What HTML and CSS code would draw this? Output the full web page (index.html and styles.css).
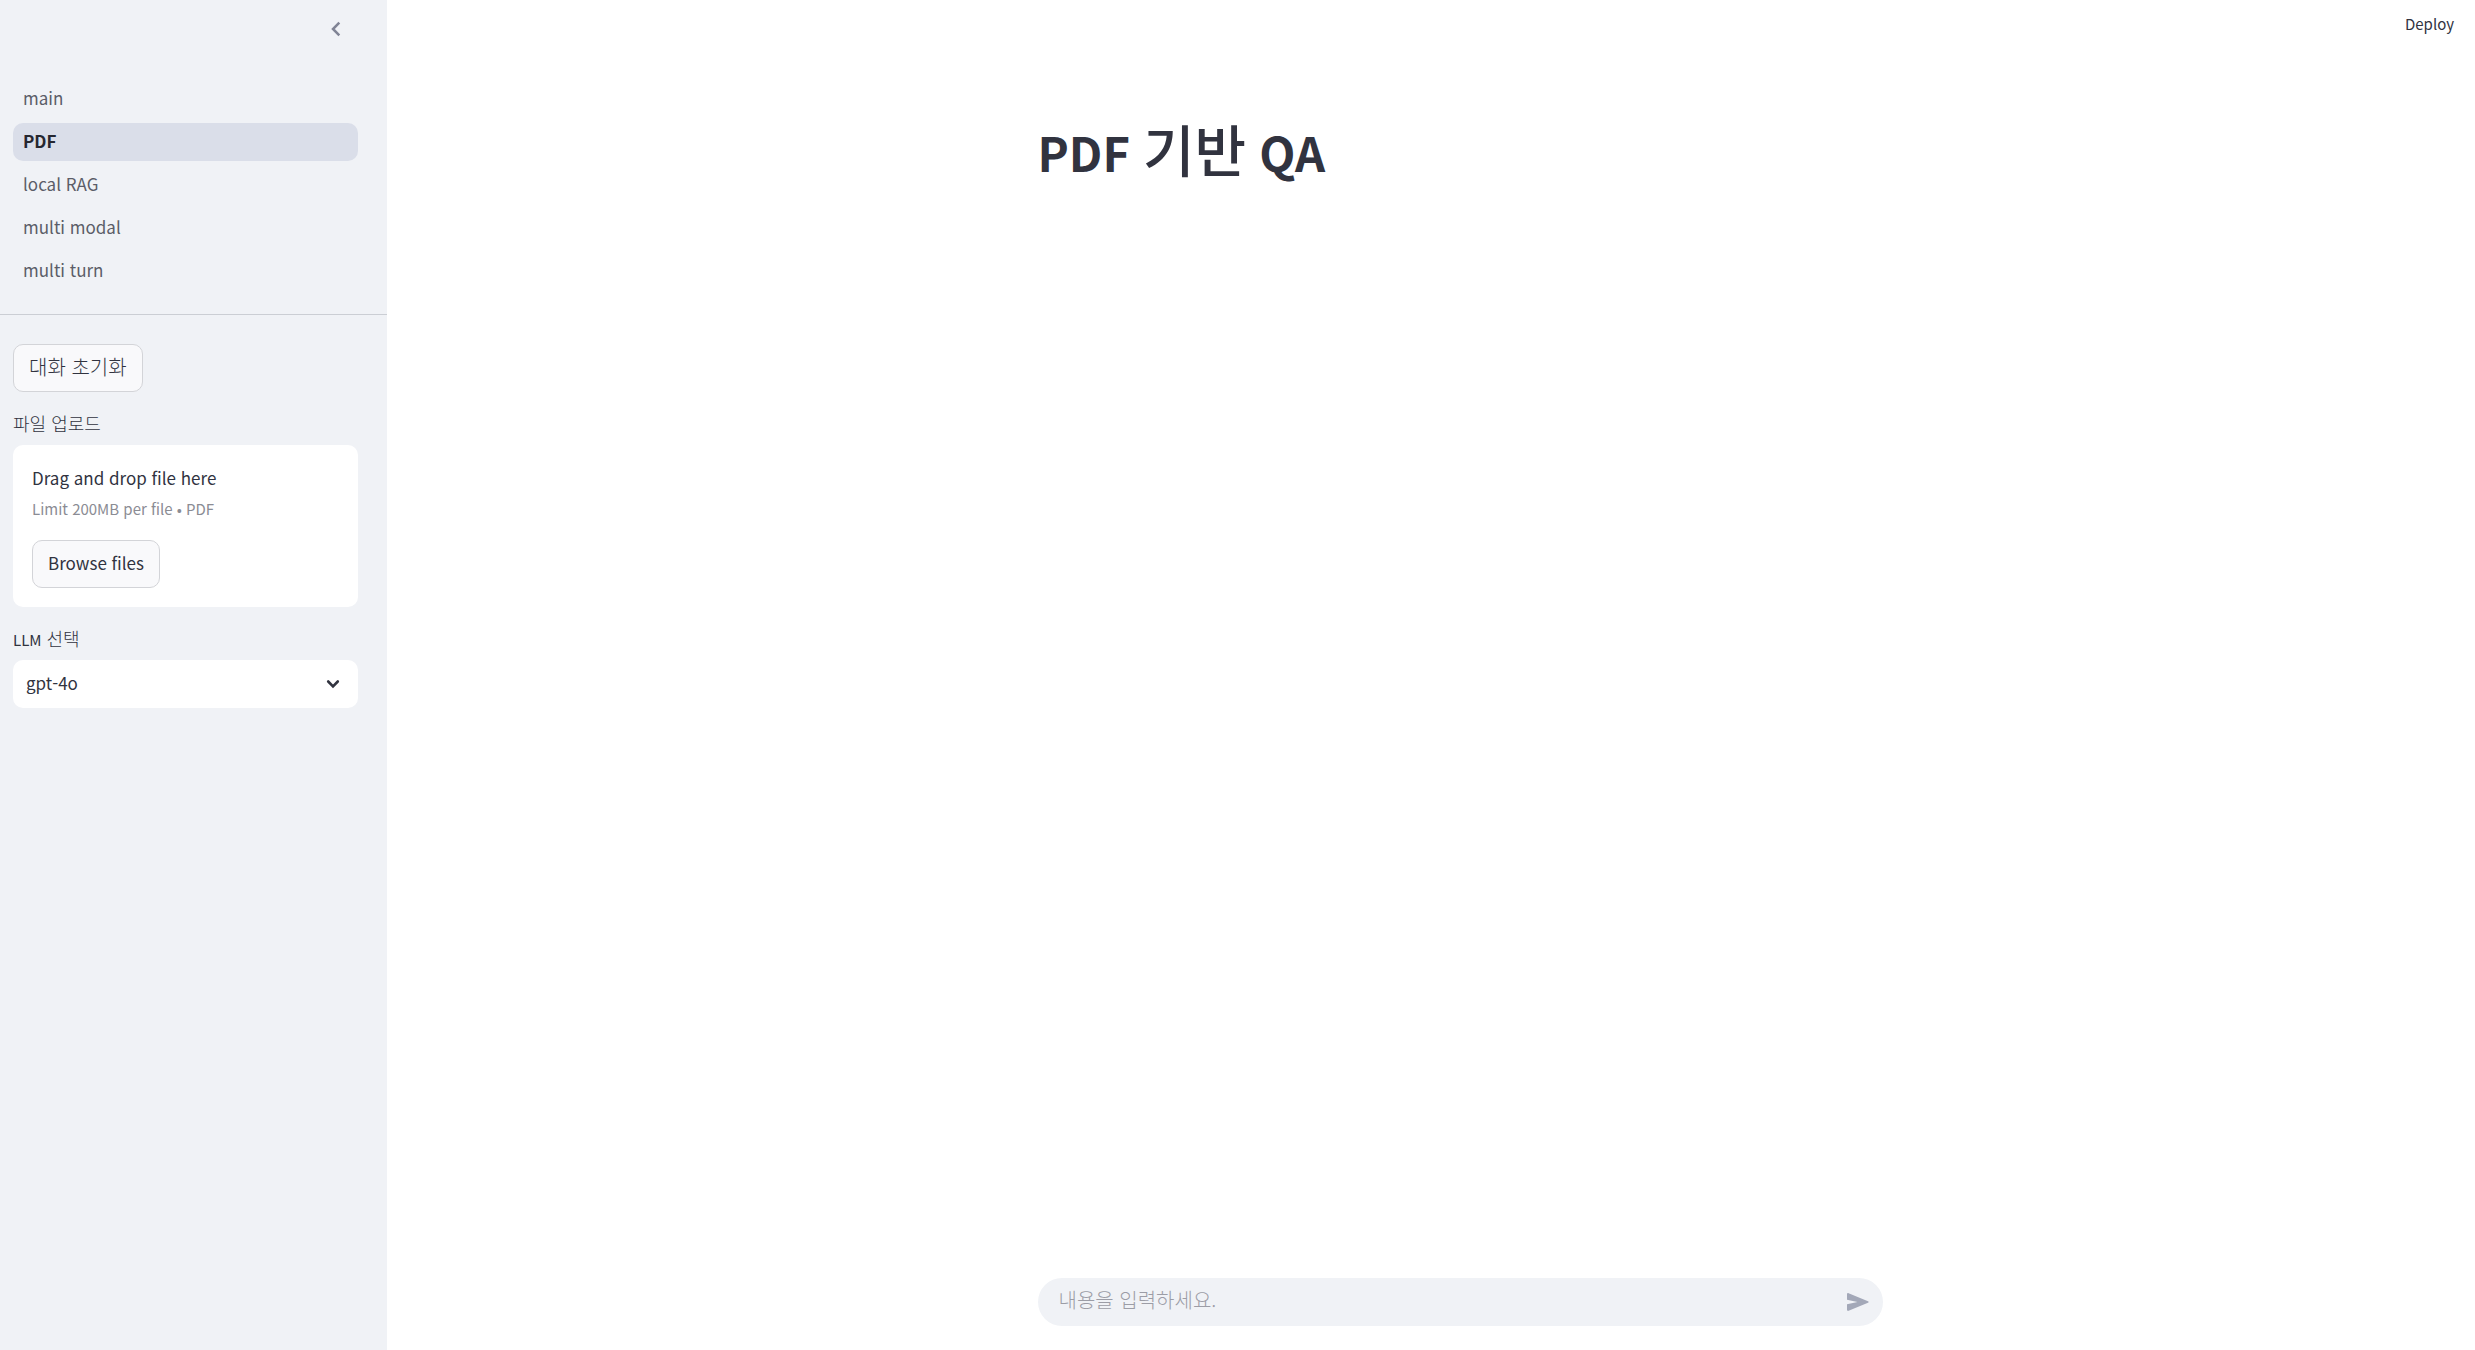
FILE: index.html
```html
<!DOCTYPE html>
<html lang="ko">
<head>
<meta charset="utf-8">
<meta name="viewport" content="width=device-width, initial-scale=1">
<title>PDF 기반 QA</title>
<link rel="stylesheet" href="styles.css">
</head>
<body>
<div class="app">
  <aside class="sidebar">
    <div class="sidebar-header">
      <button class="icon-button" type="button" aria-label="Close sidebar">
        <svg width="24" height="24" viewBox="0 0 24 24" fill="none" stroke="currentColor" stroke-width="2.5"><path d="M15.3 5.6 9 12l6.300 6.400"/></svg>
      </button>
    </div>
    <nav class="nav">
      <a class="nav-link" href="#main">main</a>
      <a class="nav-link nav-link-active" href="#pdf" aria-current="page">PDF</a>
      <a class="nav-link" href="#local-rag">local RAG</a>
      <a class="nav-link" href="#multi-modal">multi modal</a>
      <a class="nav-link" href="#multi-turn">multi turn</a>
    </nav>
    <div class="controls">
      <button class="button button-ko" type="button">대화 초기화</button>
      <div class="field">
        <label class="label" for="upload">파일 업로드</label>
        <div class="dropzone">
          <span class="drop-title">Drag and drop file here</span>
          <span class="drop-limit">Limit 200MB per file • PDF</span>
          <button class="button" id="upload" type="button">Browse files</button>
        </div>
      </div>
      <div class="field">
        <label class="label" for="llm"><span class="label-latin">LLM</span> 선택</label>
        <div class="select-box">
          <select class="select" id="llm"><option>gpt-4o</option></select>
          <svg class="select-arrow" width="24" height="24" viewBox="0 0 24 24" fill="none" stroke="currentColor" stroke-width="2.6" stroke-linecap="round"><path d="m7.200 9.500 4.800 4.800 4.800-4.800"/></svg>
        </div>
      </div>
    </div>
  </aside>
  <div class="page">
    <header class="toolbar"><button class="deploy" type="button">Deploy</button></header>
    <main class="content">
      <h1 class="title">PDF <span class="title-ko">기반</span> QA</h1>
    </main>
    <footer class="bottom">
      <form class="chat">
        <input class="chat-input" type="text" placeholder="내용을 입력하세요." aria-label="내용을 입력하세요.">
        <button class="send" type="button" aria-label="Send">
          <svg width="22" height="18" viewBox="0 0 22 18" fill="currentColor"><path d="M0 1.200C0 .3.800-.1 1.600.200L21 8.200c.8.400.8 1.200 0 1.600L1.600 17.800C.800 18.100 0 17.700 0 16.800V11.200L10.500 9 0 6.800Z"/></svg>
        </button>
      </form>
    </footer>
  </div>
</div>
</body>
</html>
```
FILE: styles.css
```css
* {
  box-sizing: border-box;
}

body {
  margin: 0;
  color: #31333f;
  background: #fff;
  font-family: "Noto Sans CJK KR", "Noto Sans", sans-serif;
  font-size: 17px;
  line-height: 24px;
}

button,
input,
select {
  margin: 0;
  color: inherit;
  font: inherit;
}

button {
  cursor: pointer;
}

.app {
  display: flex;
  min-height: 100vh;
}

.sidebar {
  flex: 0 0 387px;
  background: #f0f2f6;
}

.sidebar-header {
  display: flex;
  justify-content: flex-end;
  height: 80px;
  padding: 17px 39px;
}

.icon-button {
  width: 24px;
  height: 24px;
  padding: 0;
  border: 0;
  background: none;
  color: #808495;
}

.nav {
  display: flex;
  flex-direction: column;
  gap: 5px;
  padding: 0 29px 24px 13px;
  border-bottom: 1px solid #cbced4;
}

.nav-link {
  padding: 6px 10px 8px;
  border-radius: 10px;
  color: #5b5d68;
  text-decoration: none;
}

.nav-link-active {
  background: #dadee9;
  color: #262730;
  font-weight: 600;
}

.controls {
  display: flex;
  flex-direction: column;
  align-items: flex-start;
  gap: 19px;
  padding: 29px 29px 29px 13px;
}

.button {
  height: 48px;
  padding: 0 15px 2px;
  border: 1px solid #d3d4d8;
  border-radius: 10px;
  background: #f9f9fb;
}

.button-ko {
  font-size: 20px;
  font-weight: 300;
}

.field {
  display: flex;
  flex-direction: column;
  gap: 10px;
  width: 100%;
}

.label {
  font-size: 18px;
  font-weight: 300;
}

.label-latin {
  font-size: 15px;
  font-weight: 400;
  line-height: 16px;
}

.dropzone {
  display: flex;
  flex-direction: column;
  align-items: flex-start;
  padding: 21px 19px 19px;
  border-radius: 10px;
  background: #fff;
}

.drop-title {
  margin-bottom: 7px;
}

.drop-limit {
  margin-bottom: 19px;
  color: #8b8c94;
  font-size: 15px;
}

.select-box {
  position: relative;
}

.select {
  display: block;
  width: 100%;
  height: 48px;
  padding: 0 13px 2px;
  border: 0;
  border-radius: 10px;
  background: #fff;
  appearance: none;
}

.select-arrow {
  position: absolute;
  top: 12px;
  right: 13px;
  pointer-events: none;
}

.page {
  display: flex;
  flex: 1;
  flex-direction: column;
}

.toolbar {
  display: flex;
  justify-content: flex-end;
  padding: 12px 21px;
}

.deploy {
  padding: 0;
  border: 0;
  background: none;
  font-size: 15px;
}

.content,
.bottom {
  width: 100%;
  padding: 0 0 0 58px;
}

.content {
  flex: 1;
}

.title {
  max-width: 845px;
  margin: 68px auto 0;
  font-size: 47px;
  font-weight: 700;
  line-height: 64px;
}

.title-ko {
  font-size: 56px;
  font-weight: 500;
}

.bottom {
  padding-bottom: 24px;
}

.chat {
  display: flex;
  align-items: center;
  max-width: 845px;
  height: 48px;
  margin: 0 auto;
  padding: 0 14px 0 21px;
  border-radius: 24px;
  background: #f0f2f6;
}

.chat-input {
  flex: 1;
  min-width: 0;
  padding: 0 0 4px;
  border: 0;
  outline: 0;
  background: none;
  font-size: 20px;
  font-weight: 300;
}

.chat-input::placeholder {
  color: #9c9da6;
  opacity: 1;
}

.send {
  display: flex;
  padding: 0;
  border: 0;
  background: none;
  color: #a3a8b8;
}
```
